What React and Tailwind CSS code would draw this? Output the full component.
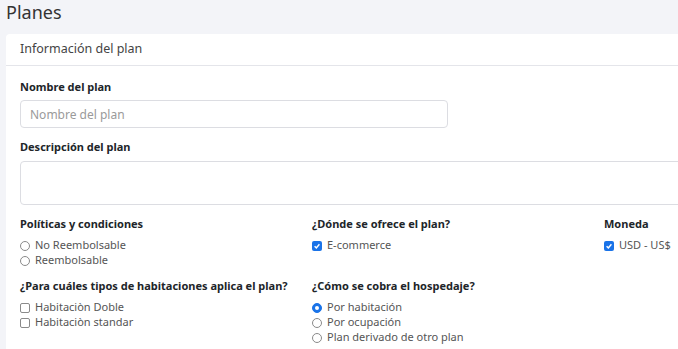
import React from "react";

const Radio = ({ checked, label }) => (
  <label className="flex items-center gap-[5px] h-[15px] text-[11px] text-[#555]">
    {checked ? (
      <span className="w-[10px] h-[10px] rounded-full border border-[#1a73e8] bg-[#1a73e8] flex items-center justify-center">
        <span className="w-[4px] h-[4px] rounded-full bg-white" />
      </span>
    ) : (
      <span className="w-[10px] h-[10px] rounded-full border border-[#8a8a8a] bg-white" />
    )}
    <span>{label}</span>
  </label>
);

const Check = ({ checked, label }) => (
  <label className="flex items-center gap-[5px] h-[15px] text-[11px] text-[#555]">
    {checked ? (
      <span className="w-[10px] h-[10px] rounded-[2px] bg-[#1a73e8] flex items-center justify-center">
        <svg viewBox="0 0 10 10" className="w-[8px] h-[8px]">
          <path d="M2 5.2 L4.2 7.3 L8 2.8" fill="none" stroke="white" strokeWidth="1.8" />
        </svg>
      </span>
    ) : (
      <span className="w-[10px] h-[10px] rounded-[2px] border border-[#8a8a8a] bg-white" />
    )}
    <span>{label}</span>
  </label>
);

const Label = ({ children }) => (
  <div className="text-[11px] font-bold text-[#212529] leading-[16px]">{children}</div>
);

export default function App() {
  return (
    <div
      className="w-screen h-screen overflow-hidden bg-[#f3f4f8] pl-[6px]"
      style={{ fontFamily: '"Noto Sans", sans-serif' }}
    >
      <h1 className="text-[18px] text-[#333] leading-[22px] pt-[1px] h-[34px]">Planes</h1>
      <div className="w-[900px] bg-white rounded-[4px] pb-[30px]">
        <div className="h-[32px] px-[14px] flex items-center border-b border-[#e4e5ea] text-[12.5px] text-[#444]">
          Información del plan
        </div>
        <div className="px-[14px] pt-[13px]">
          <Label>Nombre del plan</Label>
          <input
            placeholder="Nombre del plan"
            className="mt-[5px] w-[428px] h-[28px] px-[9px] text-[12px] border border-[#dcdde2] rounded-[4px] placeholder:text-[#9a9a9a] outline-none"
          />
          <div className="mt-[11px]">
            <Label>Descripción del plan</Label>
          </div>
          <textarea className="mt-[6px] block w-full h-[44px] border border-[#dcdde2] rounded-[4px] resize-none outline-none" />
          <div className="grid grid-cols-3 w-[876px] mt-[11px]">
            <div>
              <Label>Políticas y condiciones</Label>
              <div className="mt-[6px]">
                <Radio label="No Reembolsable" />
                <Radio label="Reembolsable" />
              </div>
            </div>
            <div>
              <Label>¿Dónde se ofrece el plan?</Label>
              <div className="mt-[6px]">
                <Check checked label="E-commerce" />
              </div>
            </div>
            <div>
              <Label>Moneda</Label>
              <div className="mt-[6px]">
                <Check checked label="USD - US$" />
              </div>
            </div>
            <div className="mt-[10px]">
              <Label>¿Para cuáles tipos de habitaciones aplica el plan?</Label>
              <div className="mt-[6px]">
                <Check label="Habitaciòn Doble" />
                <Check label="Habitaciòn standar" />
              </div>
            </div>
            <div className="mt-[10px] col-span-2">
              <Label>¿Cómo se cobra el hospedaje?</Label>
              <div className="mt-[6px]">
                <Radio checked label="Por habitación" />
                <Radio label="Por ocupación" />
                <Radio label="Plan derivado de otro plan" />
              </div>
            </div>
          </div>
        </div>
      </div>
    </div>
  );
}
